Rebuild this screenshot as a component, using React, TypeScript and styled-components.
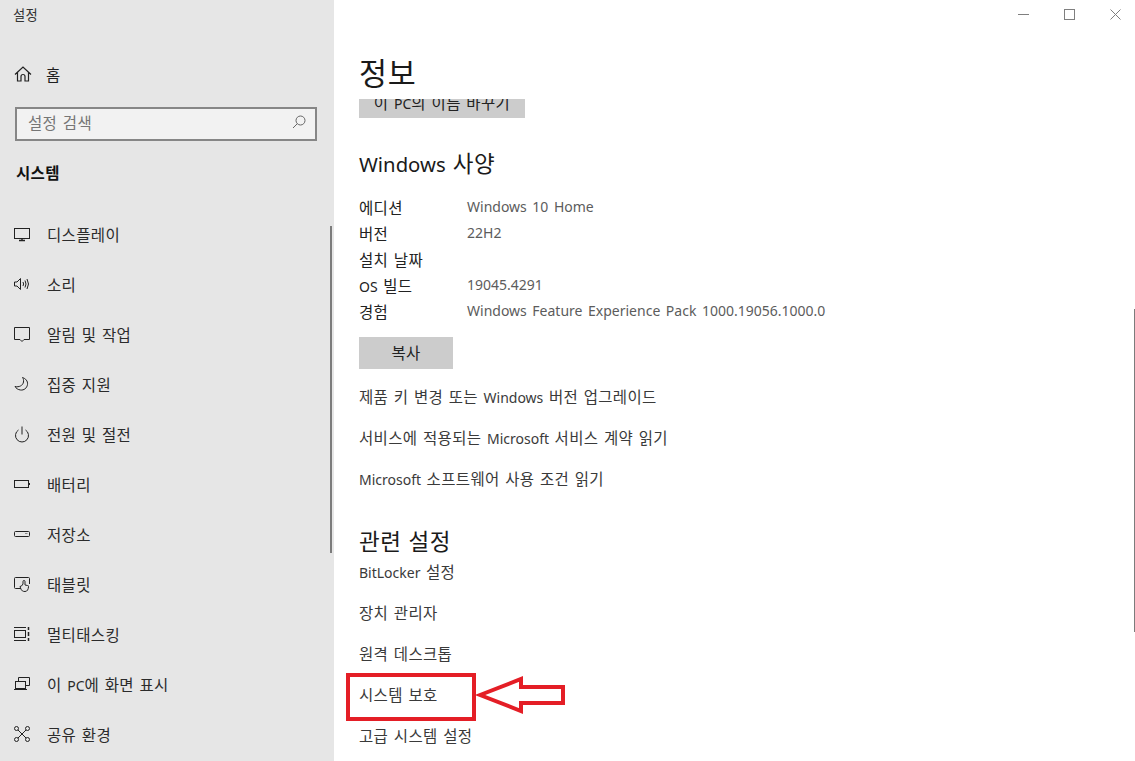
import React from 'react';
import styled, {createGlobalStyle} from 'styled-components';

const FONT = `"Noto Sans", "Noto Sans CJK KR", sans-serif`;

const GlobalStyle = createGlobalStyle`
    html, body {
        margin: 0;
        padding: 0;
        height: 100%;
        overflow: hidden;
        background: #fff;
    }
    #root {
        height: 761px;
    }
`;

// hangul in the reference sets wider than the latin next to it
const Hangul = styled.span`
    font-family: "Noto Sans CJK KR", sans-serif;
    font-size: 1.107em;
    letter-spacing: 0.023em;
`;

const Ko = ({children}: {children: string}) => (
    <>
        {children.split(/([\uAC00-\uD7A3]+)/).map((part, i) => (
            i % 2 === 1 ? <Hangul key={i}>{part}</Hangul> : part
        ))}
    </>
);

const Window = styled.div`
    position: relative;
    display: flex;
    width: 1135px;
    height: 761px;
    overflow: hidden;
    font-family: ${FONT};
    word-spacing: 0.12em;
    color: #222;
`;

const Sidebar = styled.aside`
    position: relative;
    flex: 0 0 334px;
    box-sizing: border-box;
    background: #e6e6e6;
    padding-top: 7px;
`;

const AppTitle = styled.div`
    height: 16px;
    padding-left: 13px;
    font-size: 12px;
    line-height: 16px;
    color: #333;
`;

const HomeRow = styled.div`
    display: flex;
    align-items: center;
    height: 30px;
    margin-top: 36px;
    padding-left: 14px;
    gap: 14px;
    font-size: 14px;
    color: #1f1f1f;
`;

const SearchBox = styled.div`
    display: flex;
    align-items: center;
    justify-content: space-between;
    box-sizing: border-box;
    width: 302px;
    height: 34px;
    margin: 18px 0 0 15px;
    padding: 0 9px 4px 11px;
    border: 2px solid #868686;
    background: #f2f2f2;
    font-size: 14px;
    color: #767676;
`;

const SectionLabel = styled.div`
    margin: 20px 0 0 16px;
    height: 22px;
    font-size: 14px;
    line-height: 22px;
    font-weight: 700;
    color: #111;
`;

const NavList = styled.nav`
    display: flex;
    flex-direction: column;
    margin-top: 26px;
`;

const NavItem = styled.div`
    display: flex;
    align-items: center;
    height: 50px;
    padding-left: 13px;
    gap: 16px;
    font-size: 14px;
    color: #2b2b2b;
`;

const IconSlot = styled.svg`
    flex: none;
    width: 18px;
    height: 18px;
    fill: none;
    stroke: #222;
    stroke-width: 1;
`;

const ThumbLeft = styled.div`
    position: absolute;
    left: 330px;
    top: 226px;
    width: 2px;
    height: 327px;
    background: #7c7c7c;
`;

const Main = styled.main`
    flex: 1;
    padding: 53px 0 0 25px;
`;

const PageTitle = styled.h1`
    margin: 0;
    height: 46px;
    font-size: 27.5px;
    line-height: 38px;
    font-weight: 400;
    color: #1a1a1a;
`;

const Clip = styled.div`
    height: 19px;
    overflow: hidden;
`;

const RenameButton = styled.div`
    width: 166px;
    height: 32px;
    margin-top: -13px;
    background: #cccccc;
    font-size: 14px;
    line-height: 32px;
    text-align: center;
    color: #222;
`;

const SectionTitle = styled.h2<{$top: number}>`
    margin: ${(p) => p.$top}px 0 0;
    height: 30px;
    font-size: 20.3px;
    line-height: 28px;
    font-weight: 400;
    color: #1a1a1a;
`;

const SpecGrid = styled.dl`
    display: grid;
    grid-template-columns: 108px 1fr;
    grid-auto-rows: 26px;
    margin: 16px 0 0;
    font-size: 14px;
    line-height: 26px;
`;

const SpecKey = styled.dt`
    color: #222;
`;

const SpecValue = styled.dd`
    margin: 0;
    color: #5c5c5c;
`;

const CopyButton = styled.div`
    width: 94px;
    height: 32px;
    margin-top: 13px;
    background: #cccccc;
    font-size: 14px;
    line-height: 31px;
    text-align: center;
    color: #222;
`;

const LinkList = styled.div<{$top: number}>`
    display: flex;
    flex-direction: column;
    margin-top: ${(p) => p.$top}px;
`;

const LinkRow = styled.div`
    height: 41px;
    font-size: 14px;
    line-height: 41px;
    color: #3a3a3a;
`;

const WindowControls = styled.div`
    position: absolute;
    top: 0;
    right: -3px;
    display: flex;
`;

const ControlButton = styled.div`
    display: flex;
    align-items: center;
    justify-content: center;
    width: 46px;
    height: 29px;
`;

const ControlIcon = styled.svg`
    width: 11px;
    height: 11px;
    fill: none;
    stroke: #7f7f7f;
    stroke-width: 1;
`;

const ThumbRight = styled.div`
    position: absolute;
    left: 1134px;
    top: 309px;
    width: 1px;
    height: 323px;
    background: #7c7c7c;
`;

const Highlight = styled.div`
    position: absolute;
    left: 346px;
    top: 673px;
    box-sizing: border-box;
    width: 130px;
    height: 48px;
    border: 4px solid #e41e26;
`;

const ArrowMark = styled.svg`
    position: absolute;
    left: 476px;
    top: 674px;
    width: 90px;
    height: 46px;
    fill: #fff;
    stroke: #e41e26;
    stroke-width: 4;
`;

const icons: Record<string, React.ReactNode> = {
    display: (
        <>
            <rect x='1.5' y='3.5' width='15' height='10'/>
            <path d='M9 13.5v2M6 15.5h6' strokeWidth='1.4'/>
        </>
    ),
    sound: (
        <>
            <path d='M1.5 7h2.5l3.5-3.5v11L4 11H1.5z'/>
            <path d='M10 7q1.2 2 0 4M12 5.5q2 3.5 0 7M14 4q3 5 0 10'/>
        </>
    ),
    notify: <path d='M1.5 2.5h15v12h-5.5L9 16.5 7 14.5H1.5z'/>,
    moon: <path d='M9.5 2.5c3 1 5.5 3.5 5 7-.5 3.5-3.5 6-7 5.5-2.5-.3-4.5-1.7-5.5-3.5 4 1 8-1 8.5-4.5.2-1.8 0-3.3-1-4.5z'/>,
    power: (
        <>
            <path d='M5.5 5a6.5 6.5 0 1 0 7 0'/>
            <path d='M9 1.5v8'/>
        </>
    ),
    battery: (
        <>
            <rect x='1.5' y='5.5' width='14' height='7'/>
            <path d='M16.5 8v2'/>
        </>
    ),
    storage: (
        <>
            <rect x='1.5' y='6.5' width='15' height='5' rx='1'/>
            <path d='M12 8.5h2.5' stroke='#888'/>
        </>
    ),
    tablet: (
        <>
            <path d='M8 13.5H2.5a1 1 0 0 1-1-1v-9a1 1 0 0 1 1-1h13a1 1 0 0 1 1 1V9'/>
            <path d='M10 9V6.5a1 1 0 0 1 2 0V10l2.5.5a1 1 0 0 1 1 1.2c-.2 2.5-1 4.8-3.5 4.8-2 0-3.5-.5-4.500-3.500l-.5-1.500 1.500-.5z' fill='#e6e6e6'/>
        </>
    ),
    multitask: (
        <>
            <rect x='1.5' y='5.5' width='11' height='7'/>
            <path d='M1 2.5h12M1 15.5h12'/>
            <path d='M15.5 2v3M15.5 7v4M15.5 13v3' strokeWidth='1.5'/>
        </>
    ),
    project: (
        <>
            <path d='M5.5 6V2.5h11v8H13'/>
            <rect x='2.5' y='6.5' width='10' height='7'/>
            <path d='M1 14.5h13'/>
        </>
    ),
    share: (
        <>
            <path d='M4.5 4.5l9 9M13.5 4.5l-9 9'/>
            <circle cx='3.5' cy='3.5' r='2' fill='#e6e6e6'/>
            <circle cx='14.5' cy='3.5' r='2' fill='#e6e6e6'/>
            <circle cx='3.5' cy='14.5' r='2' fill='#e6e6e6'/>
            <circle cx='14.5' cy='14.5' r='2' fill='#e6e6e6'/>
        </>
    ),
};

const navItems = [
    ['display', '디스플레이'],
    ['sound', '소리'],
    ['notify', '알림 및 작업'],
    ['moon', '집중 지원'],
    ['power', '전원 및 절전'],
    ['battery', '배터리'],
    ['storage', '저장소'],
    ['tablet', '태블릿'],
    ['multitask', '멀티태스킹'],
    ['project', '이 PC에 화면 표시'],
    ['share', '공유 환경'],
];

const specs = [
    ['에디션', 'Windows 10 Home'],
    ['버전', '22H2'],
    ['설치 날짜', ''],
    ['OS 빌드', '19045.4291'],
    ['경험', 'Windows Feature Experience Pack 1000.19056.1000.0'],
];

const supportLinks = [
    '제품 키 변경 또는 Windows 버전 업그레이드',
    '서비스에 적용되는 Microsoft 서비스 계약 읽기',
    'Microsoft 소프트웨어 사용 조건 읽기',
];

const relatedLinks = ['BitLocker 설정', '장치 관리자', '원격 데스크톱', '시스템 보호', '고급 시스템 설정'];

const App = () => (
    <Window>
        <GlobalStyle/>
        <Sidebar>
            <AppTitle><Ko>{'설정'}</Ko></AppTitle>
            <HomeRow>
                <IconSlot viewBox='0 0 18 18'>
                    <path d='M1 9.5L9 2l8 7.5M3.5 7.5V16H7v-4.5a2 2 0 0 1 4 0V16h3.5V7.5' strokeWidth='1.2'/>
                </IconSlot>
                <span><Ko>{'홈'}</Ko></span>
            </HomeRow>
            <SearchBox>
                <span><Ko>{'설정 검색'}</Ko></span>
                <svg width='14' height='14' viewBox='0 0 14 14' fill='none' stroke='#666'>
                    <circle cx='8.5' cy='5.5' r='4.5'/>
                    <path d='M5.3 8.7L1 13'/>
                </svg>
            </SearchBox>
            <SectionLabel><Ko>{'시스템'}</Ko></SectionLabel>
            <NavList>
                {navItems.map(([icon, label]) => (
                    <NavItem key={label}>
                        <IconSlot viewBox='0 0 18 18'>{icons[icon]}</IconSlot>
                        <span><Ko>{label}</Ko></span>
                    </NavItem>
                ))}
            </NavList>
            <ThumbLeft/>
        </Sidebar>
        <Main>
            <PageTitle><Ko>{'정보'}</Ko></PageTitle>
            <Clip>
                <RenameButton><Ko>{'이 PC의 이름 바꾸기'}</Ko></RenameButton>
            </Clip>
            <SectionTitle $top={30}><Ko>{'Windows 사양'}</Ko></SectionTitle>
            <SpecGrid>
                {specs.map(([key, value]) => (
                    <React.Fragment key={key}>
                        <SpecKey><Ko>{key}</Ko></SpecKey>
                        <SpecValue>{value}</SpecValue>
                    </React.Fragment>
                ))}
            </SpecGrid>
            <CopyButton><Ko>{'복사'}</Ko></CopyButton>
            <LinkList $top={7}>
                {supportLinks.map((link) => <LinkRow key={link}><Ko>{link}</Ko></LinkRow>)}
            </LinkList>
            <SectionTitle $top={27}><Ko>{'관련 설정'}</Ko></SectionTitle>
            <LinkList $top={-5}>
                {relatedLinks.map((link) => <LinkRow key={link}><Ko>{link}</Ko></LinkRow>)}
            </LinkList>
        </Main>
        <WindowControls>
            <ControlButton>
                <ControlIcon viewBox='0 0 11 11'><path d='M0 5.5h11'/></ControlIcon>
            </ControlButton>
            <ControlButton>
                <ControlIcon viewBox='0 0 11 11'><rect x='.5' y='.5' width='10' height='10'/></ControlIcon>
            </ControlButton>
            <ControlButton>
                <ControlIcon viewBox='0 0 11 11'><path d='M.5.5l10 10M10.5.5l-10 10'/></ControlIcon>
            </ControlButton>
        </WindowControls>
        <ThumbRight/>
        <Highlight/>
        <ArrowMark viewBox='0 0 90 46'>
            <path d='M4 21L45 5v8h42v16H45v8z'/>
        </ArrowMark>
    </Window>
);

export default App;
